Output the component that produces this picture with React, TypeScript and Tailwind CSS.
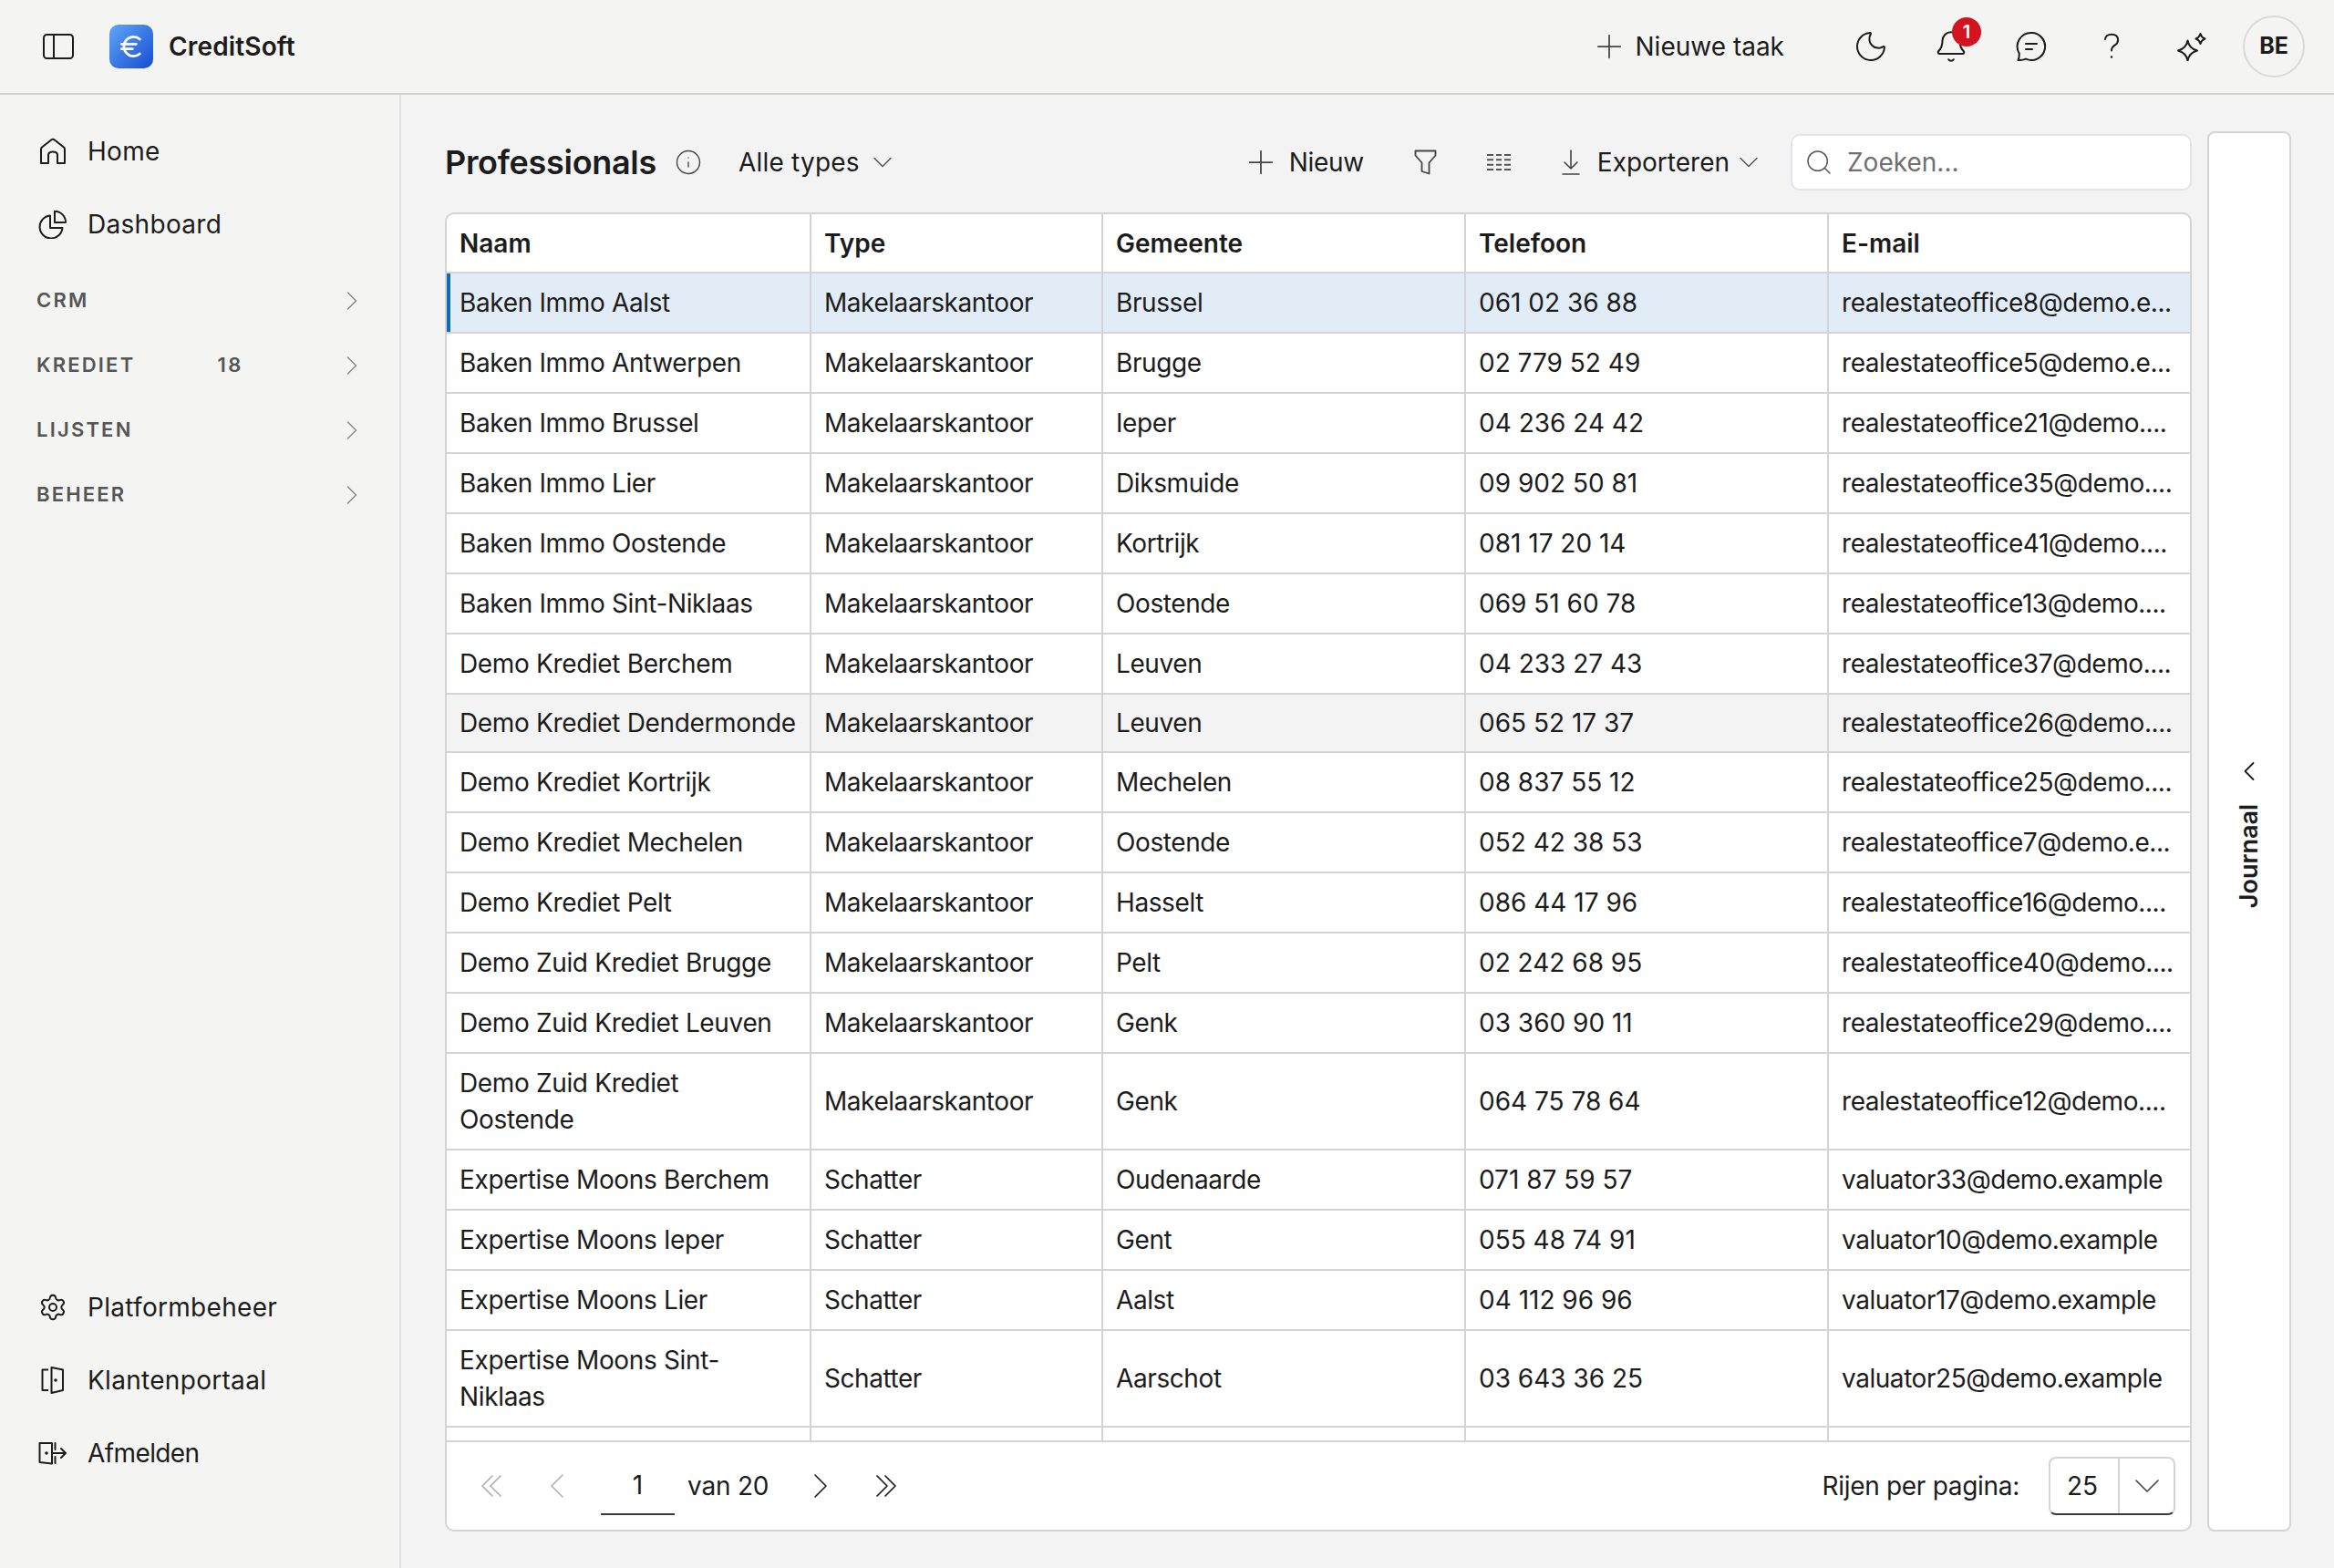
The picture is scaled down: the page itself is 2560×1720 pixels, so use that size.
import { Bell, ChevronDown, ChevronLeft, ChevronRight, Euro, Info, Moon, Plus, Search, Settings } from 'lucide-react';

type Row = { naam: string; type: string; gemeente: string; telefoon: string; email: string; state?: 'selected' | 'hover' };

const rows: Row[] = [
  { naam: 'Baken Immo Aalst', type: 'Makelaarskantoor', gemeente: 'Brussel', telefoon: '061 02 36 88', email: 'realestateoffice8@demo.e...', state: 'selected' },
  { naam: 'Baken Immo Antwerpen', type: 'Makelaarskantoor', gemeente: 'Brugge', telefoon: '02 779 52 49', email: 'realestateoffice5@demo.e...' },
  { naam: 'Baken Immo Brussel', type: 'Makelaarskantoor', gemeente: 'Ieper', telefoon: '04 236 24 42', email: 'realestateoffice21@demo....' },
  { naam: 'Baken Immo Lier', type: 'Makelaarskantoor', gemeente: 'Diksmuide', telefoon: '09 902 50 81', email: 'realestateoffice35@demo....' },
  { naam: 'Baken Immo Oostende', type: 'Makelaarskantoor', gemeente: 'Kortrijk', telefoon: '081 17 20 14', email: 'realestateoffice41@demo....' },
  { naam: 'Baken Immo Sint-Niklaas', type: 'Makelaarskantoor', gemeente: 'Oostende', telefoon: '069 51 60 78', email: 'realestateoffice13@demo....' },
  { naam: 'Demo Krediet Berchem', type: 'Makelaarskantoor', gemeente: 'Leuven', telefoon: '04 233 27 43', email: 'realestateoffice37@demo....' },
  { naam: 'Demo Krediet Dendermonde', type: 'Makelaarskantoor', gemeente: 'Leuven', telefoon: '065 52 17 37', email: 'realestateoffice26@demo....', state: 'hover' },
  { naam: 'Demo Krediet Kortrijk', type: 'Makelaarskantoor', gemeente: 'Mechelen', telefoon: '08 837 55 12', email: 'realestateoffice25@demo....' },
  { naam: 'Demo Krediet Mechelen', type: 'Makelaarskantoor', gemeente: 'Oostende', telefoon: '052 42 38 53', email: 'realestateoffice7@demo.e...' },
  { naam: 'Demo Krediet Pelt', type: 'Makelaarskantoor', gemeente: 'Hasselt', telefoon: '086 44 17 96', email: 'realestateoffice16@demo....' },
  { naam: 'Demo Zuid Krediet Brugge', type: 'Makelaarskantoor', gemeente: 'Pelt', telefoon: '02 242 68 95', email: 'realestateoffice40@demo....' },
  { naam: 'Demo Zuid Krediet Leuven', type: 'Makelaarskantoor', gemeente: 'Genk', telefoon: '03 360 90 11', email: 'realestateoffice29@demo....' },
  { naam: 'Demo Zuid Krediet Oostende', type: 'Makelaarskantoor', gemeente: 'Genk', telefoon: '064 75 78 64', email: 'realestateoffice12@demo....' },
  { naam: 'Expertise Moons Berchem', type: 'Schatter', gemeente: 'Oudenaarde', telefoon: '071 87 59 57', email: 'valuator33@demo.example' },
  { naam: 'Expertise Moons Ieper', type: 'Schatter', gemeente: 'Gent', telefoon: '055 48 74 91', email: 'valuator10@demo.example' },
  { naam: 'Expertise Moons Lier', type: 'Schatter', gemeente: 'Aalst', telefoon: '04 112 96 96', email: 'valuator17@demo.example' },
  { naam: 'Expertise Moons Sint-Niklaas', type: 'Schatter', gemeente: 'Aarschot', telefoon: '03 643 36 25', email: 'valuator25@demo.example' },
];

function HomeIcon() {
  return (
    <svg width="30" height="30" viewBox="0 0 30 30" fill="none" stroke="currentColor" strokeWidth="2" strokeLinejoin="round">
      <path d="M2 28V12.500q0-1 1-2L13.500 2.300q1.500-1.100 3 0L27 10.500q1 1 1 2V28h-8V19q0-3.500-5-3.500T10 19v9z" />
    </svg>
  );
}

function PieIcon() {
  return (
    <svg width="32" height="32" viewBox="0 0 32 32" fill="none" stroke="currentColor" strokeWidth="2" strokeLinejoin="round">
      <path d="M13 6.500a12.500 12.500 0 1 0 13.500 13.500H13z" />
      <path d="M18 1.800a12 12 0 0 1 12 12.200H18z" />
    </svg>
  );
}

function DoorIcon() {
  return (
    <svg width="26" height="32" viewBox="0 0 26 32" fill="none" stroke="currentColor" strokeWidth="2" strokeLinejoin="round">
      <path d="M8 4.500H1.500v22.500H8" />
      <path d="M11.500 2l12.500 2.500v22.500l-12.500 3z" />
      <circle cx="16" cy="16" r="0.800" fill="currentColor" />
    </svg>
  );
}

function ExitIcon() {
  return (
    <svg width="32" height="26" viewBox="0 0 32 26" fill="none" stroke="currentColor" strokeWidth="2" strokeLinejoin="round" strokeLinecap="round">
      <path d="M15 2H1.500v21l13.500 1.500V2z" />
      <circle cx="9" cy="13" r="0.800" fill="currentColor" />
      <path d="M18.500 2v7M18.500 17v7M15 13h15M25 8l5 5-5 5" />
    </svg>
  );
}

function DoubleChevron({ dir }: { dir: 'left' | 'right' }) {
  return (
    <svg width="24" height="26" viewBox="0 0 24 26" fill="none" stroke={dir === 'left' ? '#b0b0b0' : '#1c1c1c'} strokeWidth="1.700" strokeLinecap="round" strokeLinejoin="round">
      <path d={dir === 'left' ? 'M13 2L2 13l11 11M22 2L11 13l11 11' : 'M2 2l11 11L2 24M11 2l11 11-11 11'} />
    </svg>
  );
}

function NavItem({ icon, label, tight }: { icon: React.ReactNode; label: string; tight?: boolean }) {
  return (
    <div className="flex items-center h-[80px] pl-[42px]">
      <span className="w-[32px] h-[32px] flex items-center justify-center text-[#1c1c1c] mr-[22px]">{icon}</span>
      <span className={`text-[28px] text-[#1c1c1c] ${tight ? 'tracking-[-0.6px]' : 'tracking-[0.3px]'}`}>{label}</span>
    </div>
  );
}

function SectionItem({ label, badge }: { label: string; badge?: string }) {
  return (
    <div className="flex items-center h-[71px] pl-[40px] pr-[34px]">
      <span className="text-[22px] font-semibold tracking-[2.2px] text-[#555]">{label}</span>
      {badge && <span className="ml-[90px] text-[22px] font-semibold tracking-[2.5px] text-[#555]">{badge}</span>}
      <ChevronRight className="ml-auto w-[36px] h-[36px] text-[#8a8a8a]" strokeWidth={1} />
    </div>
  );
}

function TopIcon({ children }: { children: React.ReactNode }) {
  return <div className="w-[88px] h-[64px] flex items-center justify-center text-[#1c1c1c] relative">{children}</div>;
}

export default function App() {
  return (
    <div className="h-[1720px] w-[2560px] flex flex-col bg-[#f3f3f3] overflow-hidden text-[#1c1c1c] font-['Inter',sans-serif]">
      {/* top bar */}
      <header className="h-[104px] shrink-0 bg-[#f4f4f2] border-b-2 border-[#d3d3d1] flex items-center pl-[47px] pr-[32px]">
        <svg width="34" height="28" viewBox="0 0 34 28" fill="none" stroke="#1c1c1c" strokeWidth="2">
          <rect x="1" y="1" width="32" height="26" rx="3.500" />
          <path d="M12 1v26" />
        </svg>
        <div className="ml-[39px] w-[48px] h-[48px] rounded-[10px] bg-gradient-to-br from-[#62a5f8] to-[#1a4bd0] flex items-center justify-center">
          <Euro className="w-[32px] h-[32px] text-white" strokeWidth={2} />
        </div>
        <span className="ml-[17px] text-[28px] font-semibold tracking-[0.15px]">CreditSoft</span>
        <div className="ml-auto flex items-center">
          <Plus className="w-[42px] h-[42px] text-[#444]" strokeWidth={1} />
          <span className="ml-[8px] text-[28px] mr-[51px]">Nieuwe taak</span>
          <TopIcon><Moon className="w-[40px] h-[40px]" strokeWidth={1.2} /></TopIcon>
          <TopIcon>
            <Bell className="w-[38px] h-[38px]" strokeWidth={1.3} />
            <span className="absolute left-[45px] top-0 w-[32px] h-[32px] rounded-full bg-[#d3131f] text-white text-[20px] font-semibold flex items-center justify-center">1</span>
          </TopIcon>
          <TopIcon>
            <svg width="34" height="34" viewBox="0 0 34 34" fill="none" stroke="currentColor" strokeWidth="2" strokeLinecap="round" strokeLinejoin="round">
              <path d="M17 2a15 15 0 1 1-6 28.700Q7 32.500 2.500 32q1.500-3 1.200-7.500A15 15 0 0 1 17 2z" />
              <path d="M11 14h12M11 20h7" />
            </svg>
          </TopIcon>
          <TopIcon>
            <svg width="20" height="30" viewBox="0 0 22 34" fill="none" stroke="currentColor" strokeWidth="2.200" strokeLinecap="round">
              <path d="M3 8q1-6 8-6 8 0 8 7 0 4-4 6.500-4 2.500-4 6.500" />
              <circle cx="11" cy="30" r="1.400" fill="currentColor" stroke="none" />
            </svg>
          </TopIcon>
          <TopIcon>
            <svg width="32" height="32" viewBox="0 0 32 32" fill="none" stroke="currentColor" strokeWidth="2" strokeLinejoin="round">
              <path d="M11.500 9.500Q13 18 22 20.500 13 23 11.500 31.500 10 23 1 20.500 10 18 11.500 9.500z" />
              <path d="M25.500 2Q26.500 6 30.500 7.500 26.500 9 25.500 13 24.500 9 20.500 7.500 24.500 6 25.500 2z" />
            </svg>
          </TopIcon>
          <div className="ml-[12px] w-[68px] h-[68px] rounded-full border-2 border-[#d9d9d7] flex items-center justify-center text-[25px] font-bold">BE</div>
        </div>
      </header>

      <div className="flex flex-1 min-h-0">
        {/* sidebar */}
        <aside className="w-[440px] shrink-0 bg-[#f4f4f2] border-r-2 border-[#dfe2e5] flex flex-col pt-[22px] pb-[86px]">
          <NavItem icon={<HomeIcon />} label="Home" />
          <NavItem icon={<PieIcon />} label="Dashboard" />
          <div className="mt-[8px]">
            <SectionItem label="CRM" />
            <SectionItem label="KREDIET" badge="18" />
            <SectionItem label="LIJSTEN" />
            <SectionItem label="BEHEER" />
          </div>
          <div className="mt-auto">
            <NavItem icon={<Settings className="w-[32px] h-[32px]" strokeWidth={1.5} />} label="Platformbeheer" />
            <NavItem icon={<DoorIcon />} label="Klantenportaal" />
            <NavItem icon={<ExitIcon />} label="Afmelden" tight />
          </div>
        </aside>

        {/* main */}
        <main className="flex-1 min-w-0 flex pl-[48px] pr-[47px] pb-[40px] gap-[17px]">
          <div className="flex-1 min-w-0 flex flex-col">
            <div className="h-[129px] shrink-0 pt-[19px] flex items-center">
              <h1 className="text-[36px] font-semibold tracking-[-0.3px]">Professionals</h1>
              <Info className="ml-[20px] w-[30px] h-[30px] text-[#444]" strokeWidth={1.1} />
              <span className="ml-[40px] text-[28px] tracking-[0.2px]">Alle types</span>
              <ChevronDown className="ml-[7px] w-[36px] h-[36px] text-[#555]" strokeWidth={1} />
              <div className="ml-auto flex items-center">
                <Plus className="w-[42px] h-[42px] text-[#444]" strokeWidth={1} />
                <span className="ml-[10px] text-[28px] tracking-[-0.3px]">Nieuw</span>
                <svg className="ml-[55px]" width="25" height="28" viewBox="0 0 25 28" fill="none" stroke="#444" strokeWidth="1.800" strokeLinejoin="round">
                  <path d="M1.500 1.500h22v5l-7 8v12l-8-2.500V14.500l-7-8z" />
                </svg>
                <svg className="ml-[54px]" width="28" height="20" viewBox="0 0 28 20" fill="none" stroke="#555" strokeWidth="2">
                  <path d="M1 2h7M11 2h6M20 2h7M1 7.300h7M11 7.300h6M20 7.300h7M1 12.700h7M11 12.700h6M20 12.700h7M1 18h7M11 18h6M20 18h7" />
                </svg>
                <svg className="ml-[55px]" width="20" height="28" viewBox="0 0 20 28" fill="none" stroke="#444" strokeWidth="1.600" strokeLinecap="round" strokeLinejoin="round">
                  <path d="M10 1v20M3 14l7 7 7-7M1 27h18" />
                </svg>
                <span className="ml-[19px] text-[28px]">Exporteren</span>
                <ChevronDown className="ml-[3px] w-[36px] h-[36px] text-[#555]" strokeWidth={1} />
                <div className="ml-[28px] w-[440px] h-[62px] rounded-[10px] bg-white border-2 border-[#e1e4e8] flex items-center pl-[13px]">
                  <Search className="w-[32px] h-[32px] text-[#555]" strokeWidth={1.1} />
                  <span className="ml-[15px] text-[28px] text-[#707070]">Zoeken...</span>
                </div>
              </div>
            </div>

            {/* table card */}
            <div className="flex-1 min-h-0 flex flex-col rounded-[10px] border-2 border-[#d4d4d4] bg-white overflow-hidden">
              <div className="flex-1 min-h-0 overflow-hidden">
                <table className="w-full table-fixed border-separate border-spacing-0 text-[28px] leading-[40px]">
                  <colgroup>
                    <col className="w-[400px]" />
                    <col className="w-[320px]" />
                    <col className="w-[398px]" />
                    <col className="w-[398px]" />
                    <col />
                  </colgroup>
                  <thead>
                    <tr>
                      {['Naam', 'Type', 'Gemeente', 'Telefoon', 'E-mail'].map((h, i) => (
                        <th key={h} className={`h-[65px] px-[14px] text-left font-semibold border-b-2 border-[#d4d4d4] ${i < 4 ? 'border-r-2' : ''}`}>{h}</th>
                      ))}
                    </tr>
                  </thead>
                  <tbody>
                    {rows.map((r) => {
                      const bg = r.state === 'selected' ? 'bg-[#e2ecf6]' : r.state === 'hover' ? 'bg-[#f3f3f3]' : '';
                      const pad = r.state === 'hover' ? 'py-[11px]' : 'py-[12px]';
                      const cell = `px-[14px] ${pad} border-b-2 border-[#d4d4d4] ${bg}`;
                      return (
                        <tr key={r.naam}>
                          <td className={`${cell} border-r-2 relative tracking-[-0.35px]`}>
                            {r.state === 'selected' && <span className="absolute left-0 top-0 bottom-0 w-[4px] bg-[#0f6cbd]" />}
                            {r.naam}
                          </td>
                          <td className={`${cell} border-r-2 tracking-[-0.45px]`}>{r.type}</td>
                          <td className={`${cell} border-r-2 tracking-[-0.4px]`}>{r.gemeente}</td>
                          <td className={`${cell} border-r-2`}>{r.telefoon}</td>
                          <td className={`${cell} whitespace-nowrap overflow-hidden tracking-[-0.45px]`}>{r.email}</td>
                        </tr>
                      );
                    })}
                    <tr>
                      <td className="h-[66px] border-r-2 border-[#d4d4d4]" />
                      <td className="border-r-2 border-[#d4d4d4]" />
                      <td className="border-r-2 border-[#d4d4d4]" />
                      <td className="border-r-2 border-[#d4d4d4]" />
                      <td />
                    </tr>
                  </tbody>
                </table>
              </div>

              {/* pagination */}
              <div className="h-[98px] shrink-0 border-t-2 border-[#d4d4d4] flex items-center pl-[13px] pr-[16px] text-[28px]">
                <span className="w-[72px] flex justify-center"><DoubleChevron dir="left" /></span>
                <span className="w-[72px] flex justify-center"><ChevronLeft className="w-[48px] h-[48px] text-[#b0b0b0]" strokeWidth={0.8} /></span>
                <div className="ml-[12px] w-[81px] h-[64px] border-b-2 border-[#3a3a3a] flex items-center justify-center">1</div>
                <span className="ml-[14px] tracking-[-0.2px]">van 20</span>
                <span className="ml-[21px] w-[72px] flex justify-center"><ChevronRight className="w-[48px] h-[48px] text-[#1c1c1c]" strokeWidth={0.8} /></span>
                <span className="w-[72px] flex justify-center"><DoubleChevron dir="right" /></span>
                <span className="ml-auto tracking-[-0.3px]">Rijen per pagina:</span>
                <div className="ml-[32px] w-[139px] h-[64px] rounded-[8px] border-2 border-[#d4d4d4] border-b-[#3a3a3a] flex items-center">
                  <span className="w-[76px] h-full pr-[4px] border-r-2 border-[#d4d4d4] flex items-center justify-center">25</span>
                  <ChevronDown className="ml-[6px] w-[48px] h-[48px] text-[#444]" strokeWidth={0.8} />
                </div>
              </div>
            </div>
          </div>

          {/* journal rail */}
          <div className="w-[92px] shrink-0 mt-[40px] rounded-[8px] border-2 border-[#d4d4d4] bg-white flex flex-col items-center justify-center gap-[18px]">
            <ChevronLeft className="w-[36px] h-[36px] text-[#1c1c1c]" strokeWidth={1.2} />
            <span className="[writing-mode:vertical-rl] rotate-180 text-[27px] font-semibold leading-[32px]">Journaal</span>
          </div>
        </main>
      </div>
    </div>
  );
}
